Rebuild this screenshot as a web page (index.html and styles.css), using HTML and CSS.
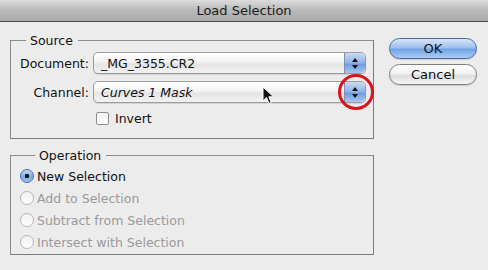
FILE: index.html
```html
<!DOCTYPE html>
<html lang="en">
<head>
  <meta charset="UTF-8">
  <title>Load Selection</title>
  <link rel="stylesheet" href="styles.css">
</head>
<body>
  <div class="titlebar">Load Selection</div>

  <div class="dialog">
    <div class="groups">
      <fieldset class="group source">
        <legend>Source</legend>
        <div class="row">
          <label class="label">Document:</label>
          <div class="select">
            <span class="value">_MG_3355.CR2</span>
            <span class="stepper"><i class="up"></i><i class="down"></i></span>
          </div>
        </div>
        <div class="row">
          <label class="label">Channel:</label>
          <div class="select">
            <span class="value italic">Curves 1 Mask</span>
            <span class="stepper"><i class="up"></i><i class="down"></i></span>
            <!-- red highlight and mouse pointer drawn over the popup -->
            <span class="ring"></span>
            <svg class="cursor" width="14" height="20" viewBox="0 0 14 20">
              <path d="M1 1 L1 15 L4.5 11.5 L7 17.5 L9.2 16.6 L6.8 10.8 L11.5 10.8 Z" fill="#111" stroke="#fff" stroke-width="1"/>
            </svg>
          </div>
        </div>
        <div class="check-row">
          <span class="checkbox"></span>
          <span>Invert</span>
        </div>
      </fieldset>

      <fieldset class="group operation">
        <legend>Operation</legend>
        <div class="radio-row"><span class="radio on"></span><span>New Selection</span></div>
        <div class="radio-row off"><span class="radio"></span><span>Add to Selection</span></div>
        <div class="radio-row off"><span class="radio"></span><span>Subtract from Selection</span></div>
        <div class="radio-row off"><span class="radio"></span><span>Intersect with Selection</span></div>
      </fieldset>
    </div>

    <div class="buttons">
      <button class="btn default">OK</button>
      <button class="btn">Cancel</button>
    </div>
  </div>
</body>
</html>
```

FILE: styles.css
```css
body {
  margin: 0;
  width: 488px;
  height: 270px;
  overflow: hidden;
  background: #ececec;
  font-family: "DejaVu Sans", "Liberation Sans", sans-serif;
  font-size: 12.5px;
  color: #111;
}

.titlebar {
  height: 21px;
  line-height: 21px;
  text-align: center;
  font-size: 13px;
  color: #1a1a1a;
  background: linear-gradient(#dcdcdc, #b9b9b9 50%, #a9a9a9);
  border-bottom: 1px solid #4a4a4a;
}

.dialog {
  display: flex;
  padding: 11px 0 0 10px;
}

.groups {
  width: 364px;
}

.group {
  margin: 0;
  padding: 0;
  border: 1px solid #8c8c8c;
  border-right-color: #7a7a7a;
  border-bottom-color: #7a7a7a;
}

.group legend {
  margin-left: 15px;
  padding: 0 5px 0 4px;
  line-height: 15px;
  color: #111;
}

.source {
  height: 100px;
  padding-top: 4px;
}

.row {
  display: flex;
  align-items: center;
  height: 22px;
  margin-bottom: 7px;
}

.label {
  width: 78px;
  text-align: right;
  padding-right: 4px;
}

.select {
  position: relative;
  display: flex;
  align-items: center;
  width: 271px;
  height: 20px;
  border: 1px solid #9c9c9c;
  border-radius: 5px;
  background: linear-gradient(#ffffff, #f3f3f3 45%, #e4e4e4 55%, #f2f2f2);
  box-shadow: 0 1px 1px rgba(0, 0, 0, 0.12);
}

.value {
  flex: 1;
  padding-left: 7px;
}

.italic {
  font-style: italic;
}

.stepper {
  display: flex;
  flex-direction: column;
  align-items: center;
  justify-content: center;
  gap: 3px;
  width: 20px;
  height: 20px;
  border-left: 1px solid #7d8fb0;
  border-radius: 0 5px 5px 0;
  background: linear-gradient(#c9daf3, #8fb3e8 50%, #6e9be0 55%, #a9c6f0);
}

.stepper i {
  width: 0;
  height: 0;
  border-left: 3px solid transparent;
  border-right: 3px solid transparent;
}

.stepper .up {
  border-bottom: 4px solid #111;
}

.stepper .down {
  border-top: 4px solid #111;
}

.ring {
  position: absolute;
  right: -9px;
  top: -8px;
  width: 30px;
  height: 30px;
  border: 3px solid #d8141c;
  border-radius: 50%;
}

.cursor {
  position: absolute;
  left: 168px;
  top: 4px;
}

.check-row {
  display: flex;
  align-items: center;
  gap: 6px;
  margin-left: 85px;
  height: 16px;
}

.checkbox {
  width: 11px;
  height: 11px;
  border: 1px solid #8f8f8f;
  border-radius: 2px;
  background: linear-gradient(#f4f4f4, #ffffff);
}

.operation {
  margin-top: 9px;
  height: 103px;
  padding: 2px 0 0 9px;
}

.radio-row {
  display: flex;
  align-items: center;
  gap: 3px;
  height: 22px;
}

.radio-row.off {
  color: #9a9a9a;
}

.radio {
  width: 12px;
  height: 12px;
  border: 1px solid #b5b5b5;
  border-radius: 50%;
  background: linear-gradient(#f1f1f1, #ffffff);
}

.radio.on {
  border-color: #4f6fa6;
  background: radial-gradient(circle, #1b1b1b 0 2px, transparent 2.5px),
    linear-gradient(#c8daf4, #7ea8e6 55%, #9cc0f0);
}

.buttons {
  display: flex;
  flex-direction: column;
  gap: 5px;
  margin-left: 15px;
  padding-top: 5px;
}

.btn {
  width: 88px;
  height: 21px;
  padding: 0;
  font-family: inherit;
  font-size: 13px;
  color: #111;
  border: 1px solid #7e7e7e;
  border-radius: 11px;
  background: linear-gradient(#ffffff, #f1f1f1 45%, #dedede 55%, #f4f4f4);
  box-shadow: 0 1px 1px rgba(0, 0, 0, 0.15);
}

.btn.default {
  border-color: #4a6aa5;
  background: linear-gradient(#d6e5f8, #9fc1ee 45%, #74a3e6 55%, #aacdf5);
}
```
